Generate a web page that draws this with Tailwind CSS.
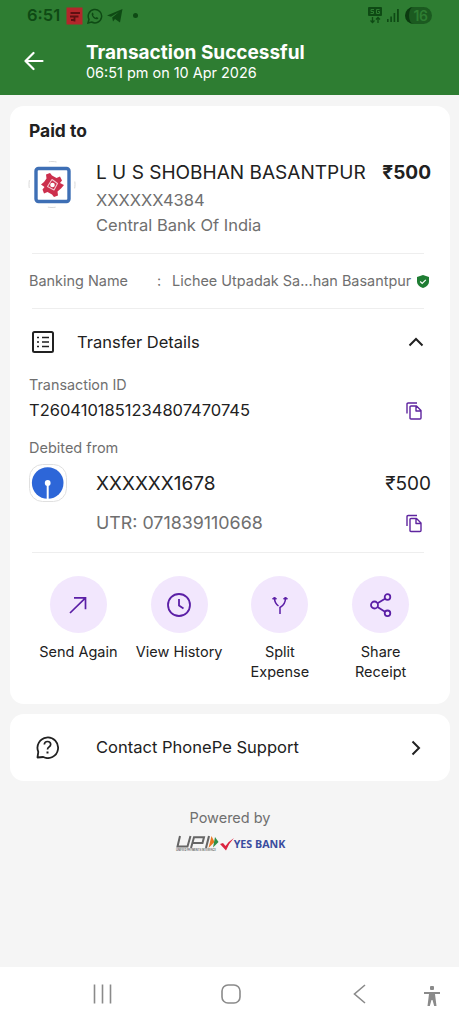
<!DOCTYPE html>
<html lang="en">
<head>
<meta charset="utf-8">
<title>Transaction Successful</title>
<script src="https://cdn.jsdelivr.net/npm/@tailwindcss/browser@4"></script>
</head>
<body class="bg-[#f5f5f5] font-['Inter',sans-serif] text-[#212121] w-[459px] h-[1024px] flex flex-col overflow-hidden whitespace-nowrap">

<header class="h-[95px] bg-[#2e7d32] flex flex-col shrink-0">
  <div class="h-[31px] flex items-center pl-[27px] pr-[27px] text-[#0e4a14]">
    <span class="text-[16.5px] font-semibold leading-none w-[39px]">6:51</span>
    <svg class="w-[17px] h-[18px]" viewBox="0 0 16 18"><rect width="16" height="17" y="0.5" fill="#b3262b"/><path d="M4 6h9.500M3.500 9.500h8.500M4.500 13h3.500M8 9v5.500" stroke="#5e1012" stroke-width="1.800" fill="none"/></svg>
    <svg class="w-[16px] h-[16px] ml-1" viewBox="0 0 16 16" fill="none" stroke="currentColor"><path d="M1 15l1-3.700A6.700 6.700 0 1 1 4.600 14z" stroke-width="1.500"/><path d="M5.700 4.500l1 1.800-.6 1c.6 1.200 1.400 2 2.600 2.500l1-.8 1.700.9c-.2 1.200-1.200 1.600-2.200 1.400C6.900 10.700 5.200 9 4.700 6.700c-.1-1 .3-1.800 1-2.200z" fill="currentColor" stroke="none"/></svg>
    <svg class="w-[16px] h-[14px] ml-[4px]" viewBox="0 0 16 14" fill="currentColor"><path d="M0 6.500L15.500 0 13 13.500 8 10l-2 2.500-.8-4L12 3 4 7.800z"/></svg>
    <span class="w-[5px] h-[5px] rounded-full bg-current ml-[10px]"></span>
    <svg class="w-[14px] h-[17px] ml-auto" viewBox="0 0 14 17" fill="none" stroke="currentColor"><rect width="14" height="9" rx="1" fill="currentColor" stroke="none"/><path d="M6 2.500H3v2h2.500v2H2.500M11.500 2.500H8.500v4h3v-2h-1.500" stroke="#2e7d32" stroke-width="1"/><path d="M4.500 10v5.500M2.500 13.500l2 2 2-2M10 16v-5.500M8 12.500l2-2 2 2" stroke-width="1.300"/></svg>
    <svg class="w-[12px] h-[13px] ml-[5px]" viewBox="0 0 12 13" fill="currentColor"><rect y="10" width="1.600" height="3"/><rect x="3.300" y="7.500" width="1.600" height="5.500"/><rect x="6.600" y="4" width="1.600" height="9"/><rect x="10" y="0" width="1.800" height="13"/></svg>
    <span class="w-[27px] h-[17px] rounded-full bg-[#1b5a20] ml-[6px] flex items-center justify-center border-l-[4px] border-[#0b3a10] text-[#2e7d32] text-[14px] font-semibold leading-none tracking-[-0.5px]">16</span>
  </div>
  <div class="h-[60px] flex items-center pl-[24px]">
    <svg class="w-5 h-5" viewBox="0 0 20 20" fill="none" stroke="#fff" stroke-width="2.200" stroke-linecap="round" stroke-linejoin="round"><path d="M18.500 10H1.500M9.500 2L1.500 10l8 8"/></svg>
    <div class="ml-[42px] mt-[3px] flex flex-col text-white">
      <div class="h-[21px] text-[19px] font-bold leading-[21px]">Transaction Successful</div>
      <div class="h-[20px] text-[14.450px] leading-[20px]">06:51 pm on 10 Apr 2026</div>
    </div>
  </div>
</header>

<main class="flex-1 pl-[10px] pr-[9px] pt-[11px] flex flex-col">
  <section class="h-[598px] bg-white rounded-[14px] px-[19px] flex flex-col shrink-0">
    <h2 class="h-[50px] flex items-center text-[17.400px] font-bold">Paid to</h2>
    <div class="h-[97px] flex">
      <div class="w-[67px]">
        <svg class="w-12 h-12 mt-[5px] -ml-[1px]" viewBox="0 0 48 48" fill="none"><circle cx="24" cy="23.500" r="23" stroke="#dadada" stroke-dasharray="8 28.130" stroke-dashoffset="4"/><rect x="8" y="7.500" width="33" height="33" rx="2.500" fill="#fff" stroke="#3e6fb5" stroke-width="3.400"/><path d="M13 23.500L16 21l2.500-3.500-.5-4 4-1.500 2 2.500 4.500 2.500 3.500-1.500 2 4-2 2.500 1 .5L36 24l-3 3.500-3.500 3 .5 4-4 1.500-2-2.500-4.500-2.500-3.500 1.500-1.500-4 2-2.500z" fill="#cc2f4d"/><path d="M24 18.500l5.500 4-3.500 6.500-6.500-3.500z" stroke="#f3c6cf" stroke-width="1.100" stroke-linejoin="round"/><circle cx="24.500" cy="24" r="2.300" fill="#fff"/></svg>
      </div>
      <div class="flex-1 flex flex-col">
        <div class="h-[35px] flex items-center justify-between text-[19.050px]"><span>L U S SHOBHAN BASANTPUR</span><span class="font-bold">₹500</span></div>
        <div class="h-[19px] flex items-center text-[16.5px] text-[#6f6f6f]">XXXXXX4384</div>
        <div class="h-[30px] flex items-center text-[16.5px] text-[#6f6f6f]">Central Bank Of India</div>
      </div>
    </div>
    <hr class="border-t border-[#eeeeee] ml-[3px] mr-[7px]">
    <div class="h-[54px] flex items-center text-[14.450px] text-[#6f6f6f]">
      <span class="w-[128px]">Banking Name</span><span class="w-[15px]">:</span><span>Lichee Utpadak Sa...han Basantpur</span>
      <svg class="w-[12px] h-[13px] ml-auto mr-[2px]" viewBox="0 0 12 13"><path d="M6 0l6 2v4.500C12 9.500 9.500 12 6 13 2.500 12 0 9.500 0 6.500V2z" fill="#1f7d33"/><path d="M3.200 6.500l2 2 3.600-3.700" stroke="#fff" stroke-width="1.200" fill="none"/></svg>
    </div>
    <hr class="border-t border-[#eeeeee] ml-[3px] mr-[7px]">
    <div class="h-[66px] flex items-center text-[16.5px]">
      <svg class="w-[22px] h-[22px] ml-[3px]" viewBox="0 0 22 22" fill="none" stroke="#212121" stroke-width="2"><rect x="1" y="1" width="20" height="20" rx="1.500"/><path d="M10 6.500h7M10 11h7M10 15.500h7M5 6.500h2M5 11h2M5 15.500h2" stroke-width="1.700"/></svg>
      <span class="ml-[23px]">Transfer Details</span>
      <svg class="w-4 h-4 ml-auto mr-[7px]" viewBox="0 0 16 16" fill="none" stroke="#212121" stroke-width="2"><path d="M1.500 11.500L8 5l6.500 6.500"/></svg>
    </div>
    <div class="h-[19px] flex items-center text-[14.350px] text-[#6f6f6f]">Transaction ID</div>
    <div class="h-[33px] flex items-center justify-between text-[16.5px]"><span>T2604101851234807470745</span>
      <svg class="w-[16px] h-[18px] mr-[9px]" viewBox="0 0 16 18" fill="none" stroke="#5f259f" stroke-width="1.400"><path d="M1 11.500V2.200Q1 1 2.200 1H11"/><path d="M4 5Q4 4 5 4h5.500L15 8.500V16q0 1-1 1H5q-1 0-1-1zM10 4v5h5" stroke-linejoin="round"/></svg></div>
    <div class="h-[42px] flex items-center text-[14.5px] text-[#6f6f6f]">Debited from</div>
    <div class="h-[28px] flex items-center text-[19px]">
      <svg class="w-[38px] h-[38px] shrink-0" viewBox="0 0 38 38"><rect x=".5" y=".5" width="37" height="37" rx="13" fill="#fff" stroke="#e0e0e0"/><circle cx="18.700" cy="19" r="15.800" fill="#2d66d8"/><path d="M18.700 19v16" stroke="#fff" stroke-width="2"/><circle cx="18.700" cy="19" r="2.900" fill="#fff"/></svg>
      <span class="ml-[29px] mt-[2px]">XXXXXX1678</span><span class="ml-auto mt-[2px]">₹500</span></div>
    <div class="h-[54px] flex items-center justify-between pl-[67px] text-[17.850px] text-[#6f6f6f]"><span class="-mt-[2px]">UTR: 071839110668</span>
      <svg class="w-[16px] h-[19px] mr-[9px] -mt-[2px]" viewBox="0 0 16 18" fill="none" stroke="#5f259f" stroke-width="1.400"><path d="M1 11.500V2.200Q1 1 2.200 1H11"/><path d="M4 5Q4 4 5 4h5.500L15 8.500V16q0 1-1 1H5q-1 0-1-1zM10 4v5h5" stroke-linejoin="round"/></svg></div>
    <hr class="border-t border-[#eeeeee] ml-[3px] mr-[7px] mt-[1px]">
    <div class="grid grid-cols-4 -ml-[1px] mt-[23px] w-[403px] text-[14.5px] leading-[20px] text-center">
      <div class="flex flex-col items-center"><span class="w-[57px] h-[57px] rounded-full bg-[#f2e7fd] flex items-center justify-center"><svg class="w-6 h-6" viewBox="0 0 24 24" fill="none" stroke="#5b1fa6" stroke-width="1.700"><path d="M4 20L19.500 4.800M8 4.800h11.500v11.500"/></svg></span><span class="mt-[9px]">Send Again</span></div>
      <div class="flex flex-col items-center"><span class="w-[57px] h-[57px] rounded-full bg-[#f2e7fd] flex items-center justify-center"><svg class="w-6 h-6" viewBox="0 0 24 24" fill="none" stroke="#5b1fa6" stroke-width="1.800"><circle cx="12" cy="12" r="11"/><path d="M12 6v6.500l4.500 3"/></svg></span><span class="mt-[9px]">View History</span></div>
      <div class="flex flex-col items-center"><span class="w-[57px] h-[57px] rounded-full bg-[#f2e7fd] flex items-center justify-center"><svg class="w-6 h-6" viewBox="0 0 24 24" fill="none" stroke="#5b1fa6" stroke-width="1.500"><path d="M12 21v-6.500Q17.500 11.500 17.500 5M10.500 13Q6.500 10 6.500 5"/><path d="M4.500 6l2-2 2 2zM15.500 6l2-2 2 2z" fill="#5b1fa6" stroke-width="1"/></svg></span><span class="mt-[9px]">Split<br>Expense</span></div>
      <div class="flex flex-col items-center"><span class="w-[57px] h-[57px] rounded-full bg-[#f2e7fd] flex items-center justify-center"><svg class="w-6 h-6" viewBox="0 0 24 24" fill="none" stroke="#5b1fa6" stroke-width="1.800"><circle cx="5.500" cy="12" r="3.500"/><circle cx="18.500" cy="4" r="2.800"/><circle cx="18.500" cy="20.300" r="2.800"/><path d="M8.500 10.200L16 5.700M8.500 14l7.500 4.800"/></svg></span><span class="mt-[9px]">Share<br>Receipt</span></div>
    </div>
  </section>

  <section class="h-[67px] mt-[10px] bg-white rounded-[14px] px-[26px] flex items-center text-[16.550px] shrink-0">
    <svg class="w-[23px] h-[23px]" viewBox="0 0 23 23" fill="none" stroke="#212121" stroke-width="1.800" stroke-linejoin="round"><path d="M1.500 21.500l.8-5.700A10.300 10.300 0 1 1 7.200 21z"/><path d="M8.300 8.500q.2-3 3.200-3t3.200 2.800q0 1.700-1.700 2.700-1.500.9-1.500 2.500" stroke-width="1.700"/><path d="M11.500 15.500v2" stroke-width="2"/></svg>
    <span class="ml-[37px]">Contact PhonePe Support</span>
    <svg class="w-4 h-4 ml-auto" viewBox="0 0 16 16" fill="none" stroke="#212121" stroke-width="2"><path d="M4.500 1.500L11 8l-6.500 6.500"/></svg>
  </section>

  <div class="mt-[27px] flex flex-col items-center">
    <div class="h-[20px] leading-[20px] text-[14.500px] text-[#6f6f6f]">Powered by</div>
    <div class="flex items-center mt-[7px] h-[18px]">
      <svg class="w-[44px] h-[18px] overflow-visible" viewBox="0 0 44 18"><g fill="none" stroke="#666" stroke-width="2"><path d="M5 1L2.500 11.500H12.500L15.500 1"/><path d="M16 13L19 2.300H29L27.500 8H18"/><path d="M34 1L31 13"/></g><path d="M36.500 1l3 6L33.500 13z" fill="#e87722"/><path d="M40 2l3.500 5L38 12.500z" fill="#2f8f46"/><text x="1" y="16" font-size="2.800" font-weight="600" textLength="40" lengthAdjust="spacingAndGlyphs" fill="#555" font-family="Inter">UNIFIED PAYMENTS INTERFACE</text></svg>
      <svg class="w-[14px] h-[13px] ml-px" viewBox="0 0 14 13"><path d="M0 6l3-1 2.500 3Q9 3 14 0 9 5 6 12.500z" fill="#dc2440"/></svg>
      <span class="font-['Open_Sans',sans-serif] font-bold text-[10.700px] text-[#3a4c9e]">YES BANK</span>
    </div>
  </div>
</main>

<nav class="h-[57px] bg-white shrink-0 flex items-center pl-[93px] text-[#8a8a8a]">
  <svg class="w-[19px] h-[20px] mb-1" viewBox="0 0 19 20" fill="none" stroke="currentColor" stroke-width="1.600"><path d="M1.500 .5v19M9.500 .5v19M17.500 .5v19"/></svg>
  <svg class="w-5 h-5 mb-1 ml-[109px]" viewBox="0 0 20 20" fill="none" stroke="currentColor" stroke-width="1.600"><rect x="1" y="1" width="18" height="18" rx="6"/></svg>
  <svg class="w-[13px] h-5 mb-1 ml-[112px]" viewBox="0 0 13 20" fill="none" stroke="currentColor" stroke-width="1.600"><path d="M12 1L1.500 10 12 19"/></svg>
  <svg class="w-4 h-5 mt-[1px] ml-[58px]" viewBox="0 0 16 20" fill="currentColor"><rect x="6" y="0" width="4" height="4" rx="1"/><path d="M0 6h16v2h-5l1.500 12h-2.300L8.500 14h-1L5.800 20H3.500L5 8H0z"/></svg>
</nav>
</body>
</html>
